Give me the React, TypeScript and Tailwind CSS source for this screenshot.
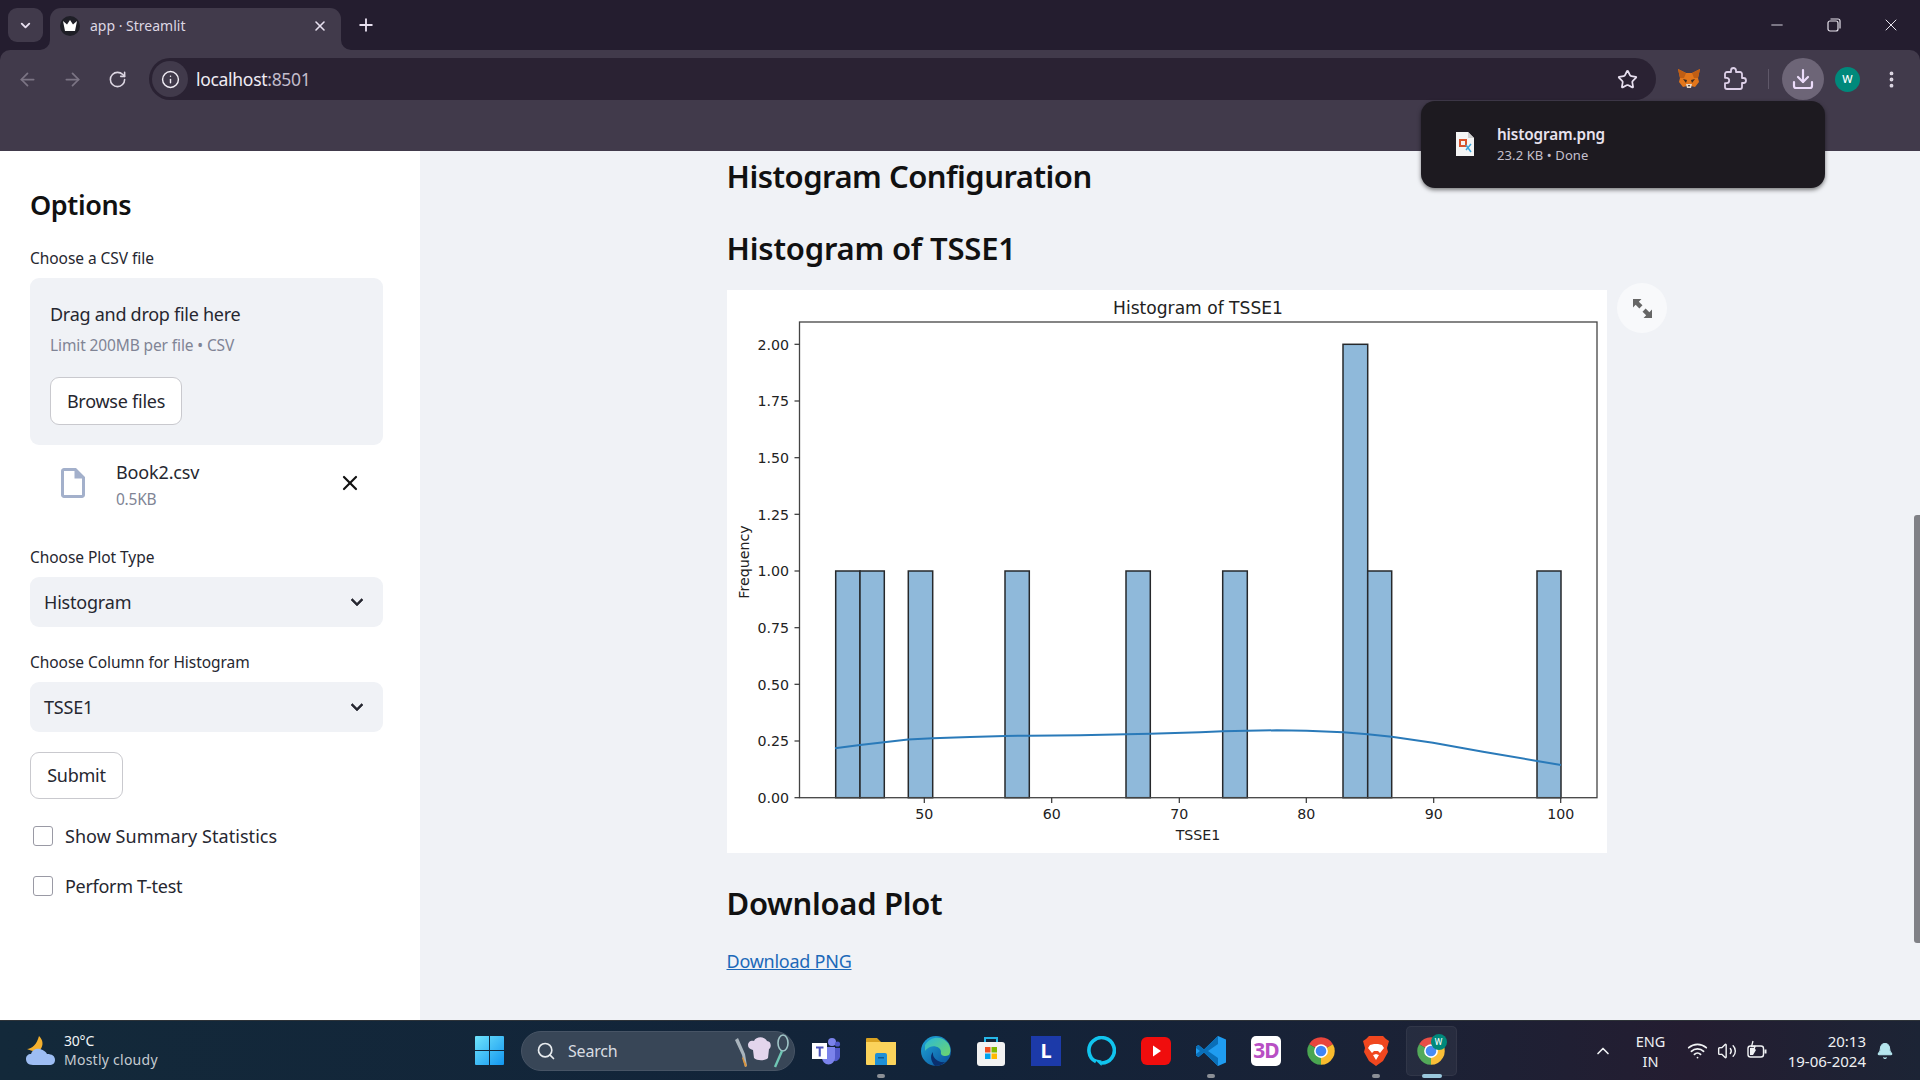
import React from "react";
import { ArrowLeft, ArrowRight, RotateCw, Info, Star, Plus, X, EllipsisVertical, Download, Search, ChevronUp, ChevronDown, Minus, Wifi, Volume2, Bell } from "lucide-react";

const sans = "font-['Noto_Sans','Open_Sans',sans-serif]";

function Chrome({ size = 30 }: { size?: number }) {
  return (
    <svg width={size} height={size} viewBox="0 0 48 48">
      <path d="M4.95 13A22 22 0 0 1 43.05 13L24 24Z" fill="#e8453c" />
      <path d="M43.05 13A22 22 0 0 1 24 46L24 24Z" fill="#f9bb2d" />
      <path d="M24 46A22 22 0 0 1 4.95 13L24 24Z" fill="#4aa651" />
      <circle cx="24" cy="24" r="11" fill="#fff" />
      <circle cx="24" cy="24" r="8.5" fill="#3f85f4" />
    </svg>
  );
}

function Fox() {
  return (
    <svg width="22" height="20" viewBox="0 0 22 20">
      <polygon points="0,0 8,4 14,4 22,0 20,9 21,13 17,18 13,17 9,17 5,18 1,13 2,9" fill="#e2761b" />
      <polygon points="0,0 8,4 6,9 2,9" fill="#c05e14" />
      <polygon points="22,0 14,4 16,9 20,9" fill="#c05e14" />
      <polygon points="5,10 9,11 8,14" fill="#3a2a20" />
      <polygon points="17,10 13,11 14,14" fill="#3a2a20" />
      <polygon points="8,15 14,15 13,19 9,19" fill="#e4d6c8" />
      <polygon points="10,16 12,16 11,18" fill="#2b211c" />
    </svg>
  );
}

function Weather() {
  return (
    <svg width="32" height="32" viewBox="0 0 32 32">
      <path d="M14 1C18 5 19 10 15 15C11 17 6 16 2 14C7 14 12 9 14 1Z" fill="#f4b02e" />
      <path d="M8 30C3 30 1 27 1 24C1 21 3 19 6 19C7 15 11 13 15 14C19 15 21 17 22 19C27 19 30 21 30 25C30 28 28 30 24 30Z" fill="#9dbdf3" />
    </svg>
  );
}

function WindowsLogo() {
  return (
    <svg width="29" height="29" viewBox="0 0 29 29">
      <defs>
        <linearGradient id="win" x1="0" y1="0" x2="1" y2="1">
          <stop offset="0" stopColor="#6fe3fb" />
          <stop offset="1" stopColor="#1296f0" />
        </linearGradient>
      </defs>
      <path d="M1 0H14V14H0V1a1 1 0 0 1 1-1ZM15 0H28a1 1 0 0 1 1 1V14H15ZM0 15H14V29H1a1 1 0 0 1-1-1ZM15 15H29V28a1 1 0 0 1-1 1H15Z" fill="url(#win)" />
    </svg>
  );
}

function ChefIcons() {
  return (
    <svg width="56" height="36" viewBox="0 0 56 36">
      <path d="M1 7L8 22L11 34L13 33L11 21L4 5Z" fill="#a9b4bd" />
      <path d="M9 24L13 33L11 34L8 25Z" fill="#d8933c" />
      <path d="M14 12C14 8 18 7 20 8C22 3 31 3 33 8C37 8 38 14 35 16L34 25C31 28 23 28 20 25L19 17C16 16 14 15 14 12Z" fill="#e3d5ec" />
      <ellipse cx="49" cy="10" rx="5" ry="8" fill="none" stroke="#9fc5c7" strokeWidth="1.6" />
      <line x1="48" y1="18" x2="41" y2="34" stroke="#6fc6b4" strokeWidth="2.4" />
    </svg>
  );
}

function Teams() {
  return (
    <svg width="30" height="30" viewBox="0 0 30 30">
      <circle cx="21" cy="6" r="4" fill="#7b83eb" />
      <circle cx="26.5" cy="8" r="2.6" fill="#5059c9" />
      <path d="M23 12h6v9a5 5 0 0 1-6 4Z" fill="#5059c9" />
      <path d="M11 11h13v11a6.500 6.500 0 0 1-13 0Z" fill="#7b83eb" />
      <rect x="1" y="7" width="15" height="16" fill="#fff" />
      <path d="M5 10.500h7.500v2h-2.700v8h-2.100v-8H5Z" fill="#4b53bc" />
    </svg>
  );
}

function Folder() {
  return (
    <svg width="30" height="30" viewBox="0 0 30 30">
      <path d="M0 3a1 1 0 0 1 1-1h10l4 4h-15Z" fill="#d9a221" />
      <path d="M0 6h30v22a1 1 0 0 1-1 1H1a1 1 0 0 1-1-1Z" fill="#fbd35b" />
      <path d="M9 19a2 2 0 0 1 2-2h8a2 2 0 0 1 2 2v10H9Z" fill="#1f8fd6" />
      <rect x="12" y="21" width="6" height="1.500" fill="#0f5b94" />
    </svg>
  );
}

function Edge() {
  return (
    <svg width="30" height="30" viewBox="0 0 30 30">
      <defs>
        <linearGradient id="edge" x1="0" y1="0" x2="1" y2="1">
          <stop offset="0" stopColor="#1fa8d8" />
          <stop offset="1" stopColor="#0b4f9c" />
        </linearGradient>
        <linearGradient id="edge2" x1="0" y1="0" x2="1" y2="1">
          <stop offset="0" stopColor="#2bb8d8" />
          <stop offset="1" stopColor="#6ed66b" />
        </linearGradient>
      </defs>
      <circle cx="15" cy="15" r="15" fill="url(#edge)" />
      <path d="M4 9C8 1 20 -1 26 6C30 10 30 16 28 19C24 21 19 20 20 16C20 11 13 9 9 11C7 12 5 13 4 15Z" fill="url(#edge2)" />
      <path d="M12 16C11 22 17 27 24 26C21 29 17 30 14 30C11 27 8 20 12 16Z" fill="#0a2f6e" />
    </svg>
  );
}

function Store() {
  return (
    <svg width="30" height="30" viewBox="0 0 30 30">
      <path d="M9 7V2h12v5" fill="none" stroke="#26b7e8" strokeWidth="2" />
      <rect x="1" y="6" width="28" height="24" rx="3" fill="#f2f2f2" />
      <rect x="9" y="11" width="5.500" height="5.500" fill="#f25022" />
      <rect x="15.500" y="11" width="5.500" height="5.500" fill="#7fba00" />
      <rect x="9" y="17.500" width="5.500" height="5.500" fill="#00a4ef" />
      <rect x="15.500" y="17.500" width="5.500" height="5.500" fill="#ffb900" />
    </svg>
  );
}

function Alexa() {
  return (
    <svg width="30" height="30" viewBox="0 0 30 30">
      <path d="M10 25.700A12.700 12.700 0 1 1 15 27" fill="none" stroke="#11c4ee" strokeWidth="3.6" />
      <path d="M8 23L15.500 30V24.500Z" fill="#11c4ee" />
    </svg>
  );
}

function YouTube() {
  return (
    <svg width="30" height="28" viewBox="0 0 30 28">
      <rect x="0" y="0" width="30" height="28" rx="6" fill="#f00d0d" />
      <path d="M12 8.500L20 14L12 19.500Z" fill="#fff" />
    </svg>
  );
}

function VSCode() {
  return (
    <svg width="30" height="30" viewBox="0 0 30 30">
      <path d="M22 0L30 3.500V26.500L22 30L8 16.500L2.500 21L0 19.500V10.500L2.500 9L8 13.500Z" fill="#1f9cf0" />
      <path d="M22 0V8L12 15L22 22V30L8 16.500L2.500 21L0 19.500V18L4 15L0 12V10.500L2.500 9L8 13.500Z" fill="#0a6fb8" />
    </svg>
  );
}

function ThreeD() {
  return (
    <div className={`w-[30px] h-[30px] bg-white rounded-[5px] flex items-center justify-center text-[21px] font-bold leading-none tracking-[-1px] text-[#b84fc4] ${sans}`}>
      3D
    </div>
  );
}

function Brave() {
  return (
    <svg width="26" height="30" viewBox="0 0 26 30">
      <path d="M6 0H20L23 3L26 5L24 12L25 16L20 25L13 30L6 25L1 16L2 12L0 5L3 3Z" fill="#f0471f" />
      <path d="M7 9L11 8H15L19 9L21 12L17 17L15 15H11L9 17L5 12ZM10 19L13 18L16 19L13 24Z" fill="#fff" />
    </svg>
  );
}

function Favicon() {
  return (
    <div className="w-[20px] h-[20px] rounded-full bg-[#1f1f27] flex items-center justify-center">
      <svg width="14" height="11" viewBox="0 0 14 11">
        <path d="M0 1L4 4.500L7 0L10 4.500L14 1L12 11H2Z" fill="#fff" />
      </svg>
    </div>
  );
}

function Extension() {
  return (
    <svg width="24" height="24" viewBox="0 0 24 24" fill="none" stroke="#ddd0e8" strokeWidth="1.800" strokeLinejoin="round">
      <path d="M20.500 11H19V7c0-1.100-.9-2-2-2h-4V3.500C13 2.120 11.880 1 10.500 1S8 2.120 8 3.500V5H4c-1.100 0-2 .9-2 2v3.800h1.500c1.490 0 2.700 1.210 2.700 2.700s-1.210 2.700-2.700 2.700H2V20c0 1.100.9 2 2 2h13c1.100 0 2-.9 2-2v-4h1.500c1.380 0 2.500-1.120 2.500-2.500S21.880 11 20.500 11z" />
    </svg>
  );
}

function Battery() {
  return (
    <svg width="22" height="22" viewBox="0 0 22 22" fill="none" stroke="#f0f2f4" strokeWidth="1.400">
      <rect x="2" y="6" width="15.500" height="11" rx="2.500" />
      <path d="M19.500 9.500V13.500" strokeWidth="2" />
      <path d="M4 15V8H8L10 10L7 15Z" fill="#f0f2f4" stroke="none" />
      <path d="M7 1L5.500 6.500H9L7.500 11" strokeWidth="1.300" />
    </svg>
  );
}

function DriveFile() {
  return (
    <svg width="36" height="36" viewBox="0 0 24 24" fill="#a3b0cb">
      <path d="M14 2H6c-1.100 0-2 .9-2 2v16c0 1.100.9 2 2 2h12c1.100 0 2-.9 2-2V8l-6-6zm4 18H6V4h7v5h5v11z" />
      <path d="M14 4l4 4h-4Z" />
    </svg>
  );
}

function Caret() {
  return (
    <svg width="24" height="24" viewBox="0 0 24 24" fill="#262730">
      <path d="M16.590 8.590L12 13.170 7.410 8.590 6 10l6 6 6-6z" stroke="#262730" strokeWidth="0.6" />
    </svg>
  );
}

function Select({ value }: { value: string }) {
  return (
    <div className="mt-[9px] h-[50px] bg-[#f0f2f6] rounded-[9px] flex items-center justify-between pl-[14px] pr-[14px]">
      <span className="text-[18px] text-[#262730] tracking-[-0.2px]">{value}</span>
      <Caret />
    </div>
  );
}

function Check({ label, mt, track }: { label: string; mt: string; track: string }) {
  return (
    <div className={`flex items-center pl-[3px] h-[24px] ${mt}`}>
      <div className="w-[20px] h-[20px] border border-[#9a9aa5] rounded-[3px] bg-white" />
      <span className={`ml-[12px] text-[18px] text-[#262730] ${track}`}>{label}</span>
    </div>
  );
}

function Label({ text, mt }: { text: string; mt: string }) {
  return <div className={`h-[22px] leading-[22px] text-[15.500px] text-[#262730] tracking-[-0.05px] ${mt}`}>{text}</div>;
}

const bars: [number, number, number][] = [
  [835.7, 860, 1],
  [860, 884.3, 1],
  [908.3, 932.7, 1],
  [1005, 1029.3, 1],
  [1126, 1150.3, 1],
  [1222.7, 1247.3, 1],
  [1343, 1367.7, 2],
  [1367.7, 1391.7, 1],
  [1537, 1561, 1],
];
const yTicks: [number, string][] = [
  [344.3, "2.00"], [401, "1.75"], [457.7, "1.50"], [514.3, "1.25"], [571, "1.00"],
  [627.7, "0.75"], [684.3, "0.50"], [741, "0.25"], [797.7, "0.00"],
];
const xTicks: [number, string][] = [
  [924.3, "50"], [1051.7, "60"], [1179.3, "70"], [1306.3, "80"], [1433.7, "90"], [1560.7, "100"],
];
const kde =
  "835,748.3 860,745 884,742.3 908,739.6 932.700,738.300 970,737 1005,736 1029,735.700 1080,735.300 1126,734.300 1150,733.800 1200,732.300 1222.700,731.300 1247,730.700 1276.700,730.300 1306.700,730.700 1343,732.300 1367.700,734.300 1391.700,736.700 1433,742.700 1483,751.700 1537,761 1561,765";

function Chart() {
  const font = { fontFamily: "'DejaVu Sans', sans-serif" };
  return (
    <svg width="880" height="563" viewBox="727 290 880 563" className="block bg-white" style={font}>
      {bars.map(([a, b, v], i) => {
        const top = v === 2 ? 344.3 : 571;
        return <rect key={i} x={a} y={top} width={b - a} height={797.7 - top} fill="#8fb9da" stroke="#26282b" strokeWidth="1.5" />;
      })}
      <polyline points={kde} fill="none" stroke="#2a7ab9" strokeWidth="2" />
      <rect x="799.5" y="322" width="797.5" height="475.700" fill="none" stroke="#444" strokeWidth="1.300" />
      {yTicks.map(([y, t]) => (
        <g key={t}>
          <line x1="794.5" x2="799.5" y1={y} y2={y} stroke="#333" strokeWidth="1.200" />
          <text x="789" y={y + 5.2} textAnchor="end" fontSize="14.200" fill="#222">{t}</text>
        </g>
      ))}
      {xTicks.map(([x, t]) => (
        <g key={t}>
          <line x1={x} x2={x} y1="797.7" y2="803" stroke="#333" strokeWidth="1.200" />
          <text x={x} y="819" textAnchor="middle" fontSize="14.200" fill="#222">{t}</text>
        </g>
      ))}
      <text x="1198" y="840" textAnchor="middle" fontSize="14.200" fill="#222">TSSE1</text>
      <text x="1198" y="313.500" textAnchor="middle" fontSize="17.100" fill="#222">Histogram of TSSE1</text>
      <text transform="translate(749 562) rotate(-90)" textAnchor="middle" fontSize="14.200" fill="#222">Frequency</text>
    </svg>
  );
}

function Slot({ children }: { children: React.ReactNode }) {
  return <div className="w-[55px] h-[50px] flex items-center justify-center">{children}</div>;
}

export default function App() {
  return (
    <div className={`relative w-[1920px] h-[1080px] overflow-hidden flex flex-col bg-[#241d2f] ${sans}`}>
      {/* tab strip */}
      <div className="h-[50px] shrink-0 bg-[#241d2f] flex items-end">
        <div className="ml-[8px] mb-[8px] w-[35px] h-[34px] rounded-[9px] bg-[#413a4b] flex items-center justify-center">
          <ChevronDown size={15} strokeWidth={3} className="text-[#e8e0f0]" />
        </div>
        <div className="relative ml-[7px] w-[291px] h-[42px] bg-[#413a4b] rounded-t-[11px] flex items-center pl-[10px] pr-[12px] pb-[7px]">
          <svg width="10" height="10" viewBox="0 0 10 10" className="absolute left-[-10px] bottom-0"><path d="M10 0V10H0A10 10 0 0 0 10 0Z" fill="#413a4b" /></svg>
          <svg width="10" height="10" viewBox="0 0 10 10" className="absolute right-[-10px] bottom-0"><path d="M0 0V10H10A10 10 0 0 1 0 0Z" fill="#413a4b" /></svg>
          <Favicon />
          <span className="ml-[10px] text-[14px] text-[#ddd7e3]">app · Streamlit</span>
          <X size={16} strokeWidth={2.4} className="ml-auto mr-[1px] text-[#e8e0f0]" />
        </div>
        <Plus size={20} strokeWidth={2.2} className="ml-[15px] mb-[15px] text-[#e8e0f0]" />
        <div className="ml-auto flex items-center h-[50px] text-[#e8e4ee]">
          <Minus size={18} strokeWidth={1.2} className="mr-[41px]" />
          <svg width="14" height="14" viewBox="0 0 14 14" fill="none" stroke="currentColor" strokeWidth="1.2" className="mr-[40px]">
            <rect x="1" y="3" width="10" height="10" rx="2" />
            <path d="M3.500 1H11a2 2 0 0 1 2 2V10.500" />
          </svg>
          <X size={20} strokeWidth={1.2} className="mr-[19px]" />
        </div>
      </div>

      {/* toolbar */}
      <div className="h-[101px] shrink-0 bg-[#413a4b] rounded-t-[10px] pt-[8px]">
        <div className="flex items-center h-[42px]">
          <ArrowLeft size={21} strokeWidth={2} className="ml-[17px] text-[#7b7484]" />
          <ArrowRight size={21} strokeWidth={2} className="ml-[24px] text-[#7b7484]" />
          <RotateCw size={19} strokeWidth={2} className="ml-[25px] text-[#ddd7e3]" />
          <div className="ml-[22px] w-[1507px] h-[42px] rounded-full bg-[#2a2233] flex items-center pl-[3px] pr-[18px]">
            <div className="w-[36px] h-[36px] rounded-full bg-[#413a4b] flex items-center justify-center">
              <Info size={19} strokeWidth={1.8} className="text-[#f0ecf4]" />
            </div>
            <span className="ml-[8px] text-[17.500px] text-[#f0ecf4] tracking-[-0.3px]">localhost<span className="text-[#c2bccb]">:8501</span></span>
            <Star size={21} strokeWidth={2} className="ml-auto text-[#e8e0f0]" />
          </div>
          <div className="ml-[22px]"><Fox /></div>
          <div className="ml-[23px]"><Extension /></div>
          <div className="ml-[21px] w-px h-[20px] bg-[#5f5869]" />
          <div className="ml-[13px] w-[42px] h-[42px] rounded-full bg-[#6d6577] flex items-center justify-center">
            <Download size={24} strokeWidth={2.2} className="text-[#ecdcfa]" />
          </div>
          <div className="ml-[11px] w-[25px] h-[25px] rounded-full bg-[#00897b] text-white text-[11px] font-medium flex items-center justify-center">W</div>
          <EllipsisVertical size={21} strokeWidth={2.4} className="ml-[21px] text-[#ddd7e3]" />
        </div>
      </div>

      {/* page */}
      <div className="flex-1 flex min-h-0">
        <aside className="w-[420px] shrink-0 bg-white pt-[34px] pl-[30px] pr-[37px]">
          <div className="h-[40px] leading-[40px] text-[27px] font-semibold text-[#111] tracking-[-0.4px]">Options</div>
          <Label text="Choose a CSV file" mt="mt-[22px]" />
          <div className="mt-[9px] h-[167px] bg-[#f0f2f6] rounded-[9px] pl-[20px] pt-[23px]">
            <div className="h-[26px] leading-[26px] text-[18px] text-[#262730] tracking-[-0.27px]">Drag and drop file here</div>
            <div className="mt-[6px] h-[24px] leading-[24px] text-[15.500px] text-[#808495] tracking-[-0.12px]">Limit 200MB per file • CSV</div>
            <div className="mt-[20px] w-[132px] h-[48px] bg-white border border-[#c9c9ce] rounded-[9px] flex items-center justify-center text-[18px] text-[#262730] tracking-[-0.25px]">Browse files</div>
          </div>
          <div className="mt-[14px] flex items-center pl-[25px] pr-[22px] h-[51px]">
            <div className="mb-[3px]"><DriveFile /></div>
            <div className="ml-[25px]">
              <div className="h-[26px] leading-[26px] text-[18px] text-[#262730] tracking-[-0.15px]">Book2.csv</div>
              <div className="mt-[3px] h-[22px] leading-[22px] text-[15.500px] text-[#808495] tracking-[-0.25px]">0.5KB</div>
            </div>
            <X size={24} strokeWidth={2.2} className="ml-auto mb-[3px] mr-[-1px] text-[#111]" />
          </div>
          <Label text="Choose Plot Type" mt="mt-[36px]" />
          <Select value="Histogram" />
          <Label text="Choose Column for Histogram" mt="mt-[24px]" />
          <Select value="TSSE1" />
          <div className="mt-[20px] w-[93px] h-[47px] bg-white border border-[#c9c9ce] rounded-[9px] flex items-center justify-center text-[18px] text-[#262730] tracking-[-0.25px]">Submit</div>
          <Check label="Show Summary Statistics" mt="mt-[25px]" track="tracking-[0.05px]" />
          <Check label="Perform T-test" mt="mt-[26px]" track="tracking-[-0.3px]" />
        </aside>

        <main className="flex-1 bg-[#f0f2f6] pl-[307px] pt-[5px]">
          <h1 className="h-[40px] leading-[40px] text-[31px] font-semibold text-[#111] tracking-[-0.5px] -ml-[0.500px]">Histogram Configuration</h1>
          <h2 className="mt-[32px] h-[40px] leading-[40px] text-[31px] font-semibold text-[#111] tracking-[-0.2px] -ml-[0.500px]">Histogram of TSSE1</h2>
          <div className="mt-[22px] flex items-start">
            <Chart />
            <div className="ml-[10px] -mt-[7px] w-[50px] h-[50px] rounded-full bg-[#f8f9fb] flex items-center justify-center">
              <svg width="19" height="19" viewBox="0 0 18 18" fill="#666">
                <path d="M0 0H8L5.500 2.500L9 6L6 9L2.500 5.500L0 8Z" />
                <path d="M18 18H10L12.500 15.500L9 12L12 9L15.500 12.500L18 10Z" />
              </svg>
            </div>
          </div>
          <h2 className="mt-[30px] h-[40px] leading-[40px] text-[31px] font-semibold text-[#111] tracking-[-0.3px] -ml-[0.500px]">Download Plot</h2>
          <a className="mt-[25px] block w-fit h-[26px] leading-[26px] text-[18px] text-[#1c69b9] underline tracking-[-0.25px] -ml-[0.500px]">Download PNG</a>
        </main>
      </div>

      {/* taskbar */}
      <div className="h-[60px] shrink-0 border-t border-[#2e3338] bg-[linear-gradient(90deg,#13293a_0%,#122339_50%,#1a2236_72%,#241d31_88%,#1c2435_100%)] flex items-center text-white">
        <div className="ml-[25px] w-[32px]"><Weather /></div>
        <div className="ml-[7px] w-[411px] text-[14px] leading-[20px]">
          <div className="text-[#f2f4f6] tracking-[-0.2px]">30°C</div>
          <div className="text-[#c5cbd1] tracking-[0.25px] -mt-[1px]">Mostly cloudy</div>
        </div>
        <WindowsLogo />
        <div className="ml-[17px] w-[274px] h-[40px] rounded-full bg-[#384657] border border-[#475465] flex items-center pl-[14px] pr-[4px]">
          <Search size={20} strokeWidth={2} className="text-[#e8ecef]" />
          <span className="ml-[12px] text-[16px] text-[#d8dde2] tracking-[-0.2px]">Search</span>
          <div className="ml-auto"><ChefIcons /></div>
        </div>
        <div className="ml-[3.500px] flex items-center">
          <Slot><Teams /></Slot>
          <div className="relative"><Slot><Folder /></Slot><div className="absolute bottom-[-2px] left-[23.500px] w-[8px] h-[4px] rounded-full bg-[#8b8f96]" /></div>
          <Slot><Edge /></Slot>
          <Slot><Store /></Slot>
          <Slot><div className={`w-[30px] h-[30px] bg-[#1c3aa9] flex items-center justify-center text-white font-bold text-[20px] ${sans}`}>L</div></Slot>
          <Slot><Alexa /></Slot>
          <Slot><YouTube /></Slot>
          <div className="relative"><Slot><VSCode /></Slot><div className="absolute bottom-[-2px] left-[23.500px] w-[8px] h-[4px] rounded-full bg-[#8b8f96]" /></div>
          <Slot><ThreeD /></Slot>
          <Slot><Chrome /></Slot>
          <div className="relative"><Slot><Brave /></Slot><div className="absolute bottom-[-2px] left-[23.500px] w-[8px] h-[4px] rounded-full bg-[#8b8f96]" /></div>
          <div className="relative">
            <Slot><Chrome /></Slot>
            <div className="absolute inset-x-[2px] top-0 bottom-0 rounded-[5px] bg-white/5 border border-white/5" />
            <div className="absolute top-[8px] left-[27px] w-[16px] h-[16px] rounded-full bg-[#00897b] text-[8px] font-medium flex items-center justify-center">W</div>
            <div className="absolute bottom-[-2px] left-[18px] w-[20px] h-[4px] rounded-full bg-[#9ac8dd]" />
          </div>
        </div>
        <ChevronUp size={20} strokeWidth={2} className="ml-[134px] text-[#f0f2f4]" />
        <div className="ml-[12px] w-[52px] text-center text-[14.500px] leading-[20px] text-[#eef0f2]">
          <div>ENG</div>
          <div>IN</div>
        </div>
        <Wifi size={21} strokeWidth={2} className="ml-[10px] text-[#f0f2f4]" />
        <Volume2 size={20} strokeWidth={1.7} className="ml-[9px] text-[#f0f2f4]" />
        <div className="ml-[9px]"><Battery /></div>
        <div className="ml-auto text-right text-[15px] leading-[20px] text-[#eef0f2]">
          <div>20:13</div>
          <div>19-06-2024</div>
        </div>
        <Bell size={18} fill="#b5e5ee" strokeWidth={1.5} className="ml-[10px] mr-[26px] text-[#b5e5ee]" />
      </div>

      {/* overlays */}
      <div className="absolute left-[1421px] top-[101px] w-[404px] h-[87px] rounded-[14px] bg-[#1d1a20] shadow-[0_2px_4px_rgba(0,0,0,0.5)] flex items-center pl-[35px]">
        <svg width="18" height="24" viewBox="0 0 18 24" className="-mt-[2px]">
          <path d="M0 0H12L18 6V24H0Z" fill="#f4f4f4" />
          <path d="M12 0L18 6H12Z" fill="#cfcfcf" />
          <rect x="4" y="8" width="6" height="6" fill="none" stroke="#d9532c" strokeWidth="2" />
          <path d="M10 18L15 12M10 13L15 20" stroke="#3aa6dd" strokeWidth="1.500" />
        </svg>
        <div className="ml-[23px] -mt-[2px]">
          <div className="text-[15.300px] leading-[22px] font-semibold text-[#e8e2ee] tracking-[-0.15px]">histogram.png</div>
          <div className="mt-[0px] text-[13px] leading-[20px] text-[#c6c0cd] tracking-[0.1px]">23.2 KB • Done</div>
        </div>
      </div>
      <div className="absolute left-[1914px] top-[515px] w-[6px] h-[428px] bg-[#808186] rounded-l-[3px]" />
    </div>
  );
}
